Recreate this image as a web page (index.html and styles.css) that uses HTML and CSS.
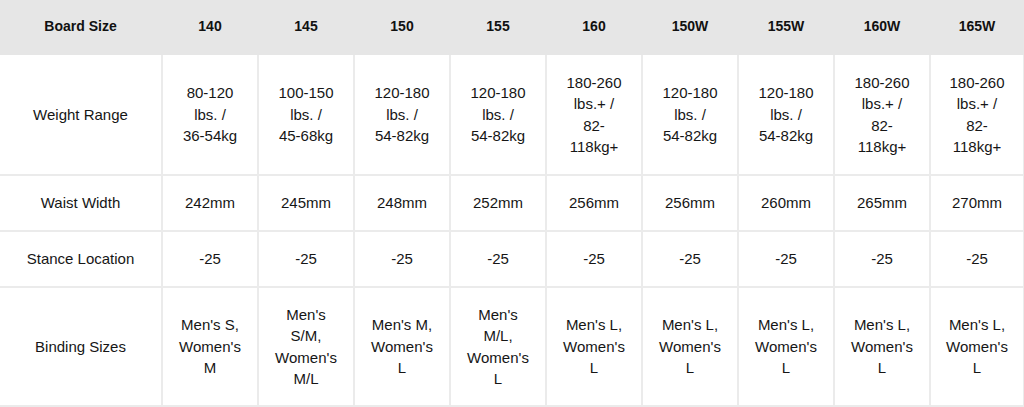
FILE: index.html
```html
<!DOCTYPE html>
<html>
<head>
<meta charset="utf-8">
<link rel="stylesheet" href="styles.css">
</head>
<body>
<table class="size-table">
  <colgroup>
    <col class="col-label">
    <col class="col-size"><col class="col-size"><col class="col-size"><col class="col-size">
    <col class="col-size"><col class="col-size"><col class="col-size"><col class="col-size">
    <col class="col-last">
  </colgroup>
  <thead>
    <tr class="head-row">
      <th>Board Size</th><th>140</th><th>145</th><th>150</th><th>155</th><th>160</th><th>150W</th><th>155W</th><th>160W</th><th>165W</th>
    </tr>
  </thead>
  <tbody>
    <tr class="row-weight">
      <td>Weight Range</td>
      <td>80-120 lbs. / <span class="nw">36-54kg</span></td>
      <td>100-150 lbs. / <span class="nw">45-68kg</span></td>
      <td>120-180 lbs. / <span class="nw">54-82kg</span></td>
      <td>120-180 lbs. / <span class="nw">54-82kg</span></td>
      <td>180-260 lbs.+ / 82-118kg+</td>
      <td>120-180 lbs. / <span class="nw">54-82kg</span></td>
      <td>120-180 lbs. / <span class="nw">54-82kg</span></td>
      <td>180-260 lbs.+ / 82-118kg+</td>
      <td>180-260 lbs.+ / 82-118kg+</td>
    </tr>
    <tr class="row-short">
      <td>Waist Width</td>
      <td>242mm</td><td>245mm</td><td>248mm</td><td>252mm</td><td>256mm</td><td>256mm</td><td>260mm</td><td>265mm</td><td>270mm</td>
    </tr>
    <tr class="row-short">
      <td>Stance Location</td>
      <td>-25</td><td>-25</td><td>-25</td><td>-25</td><td>-25</td><td>-25</td><td>-25</td><td>-25</td><td>-25</td>
    </tr>
    <tr class="row-binding">
      <td>Binding Sizes</td>
      <td>Men's S, Women's M</td>
      <td>Men's S/M, Women's M/L</td>
      <td>Men's M, Women's L</td>
      <td>Men's M/L, Women's L</td>
      <td>Men's L, Women's L</td>
      <td>Men's L, Women's L</td>
      <td>Men's L, Women's L</td>
      <td>Men's L, Women's L</td>
      <td>Men's L, Women's L</td>
    </tr>
  </tbody>
</table>
</body>
</html>
```

FILE: styles.css
```css
html, body {
  margin: 0;
  padding: 0;
  background: #ffffff;
}

.size-table {
  width: 1024px;
  table-layout: fixed;
  border-collapse: collapse;
  font-family: "Liberation Sans", Arial, sans-serif;
  color: #161616;
  font-size: 15px;
  line-height: 21.5px;
}

.col-label { width: 162px; }
.col-size { width: 96px; }
.col-last { width: 94px; }

.size-table th,
.size-table td {
  text-align: center;
  vertical-align: middle;
  padding: 0 14px;
  border: 2px solid #ebebeb;
}

.size-table tr > :first-child {
  border-left: none;
}

.nw {
  white-space: nowrap;
}

.head-row th {
  background: #e6e6e6;
  border-color: #e6e6e6;
  border-top: none;
  font-size: 14px;
  font-weight: 700;
  height: 53px;
  color: #111;
}

.row-weight td { height: 119px; }
.row-short td { height: 54px; }
.row-binding td { height: 117px; }
```
